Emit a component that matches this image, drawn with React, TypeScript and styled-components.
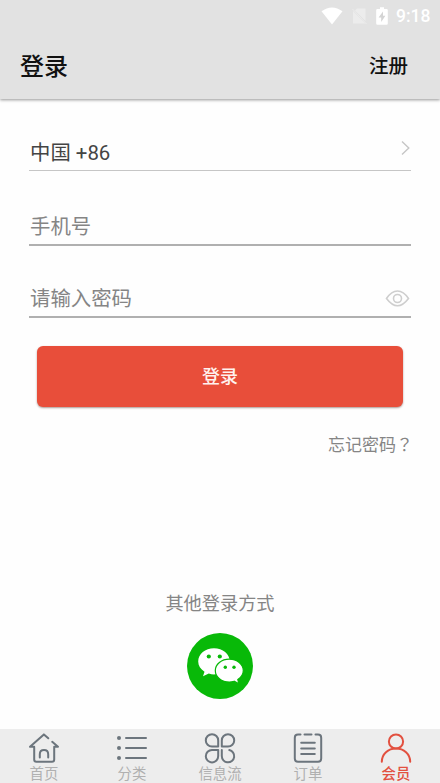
import React from "react";
import styled, { createGlobalStyle } from "styled-components";

const GlobalStyle = createGlobalStyle`
  * { box-sizing: border-box; }
  body { margin: 0; background: #fefefe; }
  button { border: 0; padding: 0; background: none; font: inherit; color: inherit; }
`;

const Screen = styled.div`
  width: 440px;
  height: 783px;
  display: flex;
  flex-direction: column;
  overflow: hidden;
  background: #fefefe;
  font-family: Roboto, "Noto Sans CJK SC", sans-serif;
`;

const Header = styled.header`
  height: 99px;
  flex: none;
  background: #e2e2e2;
  box-shadow: 0 1px 3px rgba(0, 0, 0, 0.42);
`;

const StatusBar = styled.div`
  height: 32px;
  padding: 0 10px 0 0;
  display: flex;
  justify-content: flex-end;
  align-items: center;
  color: #fff;
`;

const StatusIcons = styled.div`
  display: grid;
  grid-template-columns: 22px 15px 12px;
  column-gap: 9px;
`;

const Clock = styled.span`
  width: 34px;
  margin-left: 8px;
  font-size: 17.5px;
  font-weight: 500;
  line-height: 32px;
  white-space: nowrap;
`;

const TitleBar = styled.div`
  height: 67px;
  padding: 2px 32px 0 20px;
  display: flex;
  justify-content: space-between;
  align-items: flex-start;
  color: #111;
`;

const Title = styled.h1`
  margin: 0;
  font-size: 24px;
  font-weight: 500;
  line-height: 67px;
`;

const Register = styled.button`
  font-size: 19.5px;
  font-weight: 500;
  line-height: 65px;
`;

const Form = styled.main`
  flex: 1;
  padding: 34px 29px 0 29px;
  display: flex;
  flex-direction: column;
`;

const Field = styled.div<{ $height: number; $tone: string; $line: string }>`
  height: ${(p) => p.$height}px;
  flex: none;
  padding-left: 1px;
  display: flex;
  align-items: flex-end;
  justify-content: space-between;
  border-bottom: ${(p) => (p.$line === "thin" ? "1px solid #c6c6c6" : "2px solid #b0b0b0")};
  color: ${(p) => p.$tone};
  font-size: 20.4px;
  line-height: 34px;
`;

const FieldIcon = styled.span`
  height: 37px;
  display: flex;
  align-items: center;
`;

const Submit = styled.button`
  height: 61px;
  flex: none;
  margin: 28px 8px 0;
  padding-top: 1px;
  border-radius: 6px;
  background: #e84e3a;
  color: #fff2ef;
  font-size: 18px;
  font-weight: 500;
  line-height: 60px;
  box-shadow: 0 1px 2px rgba(70, 30, 20, 0.45);
`;

const Forgot = styled.button`
  align-self: flex-end;
  margin: 25px -2px 0 0;
  color: #858585;
  font-size: 17px;
  line-height: 24px;
`;

const QuestionMark = styled.span`
  font-family: "Noto Sans CJK TC", sans-serif;
`;

const OtherLogin = styled.section`
  height: 140px;
  flex: none;
  display: flex;
  flex-direction: column;
  align-items: center;
  gap: 14px;
  color: #858585;
  font-size: 18.2px;
  line-height: 30px;
`;

const Nav = styled.nav`
  height: 54px;
  flex: none;
  display: grid;
  grid-template-columns: repeat(5, 1fr);
  background: #ededed;
`;

const NavItem = styled.button<{ $active?: boolean }>`
  height: 54px;
  display: flex;
  flex-direction: column;
  align-items: center;
  color: ${(p) => (p.$active ? "#e2503f" : "#6c757d")};
`;

const NavLabel = styled.span<{ $active?: boolean }>`
  height: 18px;
  font-size: 14.4px;
  line-height: 19px;
  font-weight: ${(p) => (p.$active ? 500 : 400)};
  color: ${(p) => (p.$active ? "#e2503f" : "#b0b0b0")};
`;

const WifiIcon = () => (
  <svg width="22" height="18" viewBox="0 0 22 18">
    <path d="M0.5 4.3Q11-3.4 21.5 4.3L11 17.5Z" fill="#fff" />
  </svg>
);

const NoSimIcon = () => (
  <svg width="15" height="18" viewBox="0 0 15 18">
    <path d="M5 1.5H13.5V14L3 3.5ZM1 4L13.5 16.5H1Z" fill="#ececec" />
    <path d="M0.5 2L14.5 17" stroke="#ececec" strokeWidth="1" />
  </svg>
);

const BatteryIcon = () => (
  <svg width="12" height="18" viewBox="0 0 12 18">
    <path d="M4 0.3H8V2H10.5Q11.8 2 11.8 3.3V16.4Q11.8 17.7 10.5 17.7H1.5Q0.2 17.7 0.2 16.4V3.3Q0.2 2 1.5 2H4Z" fill="#fff" />
    <path d="M7 4.5L2.6 10.5H5.2V15L9.4 8.8H7Z" fill="#d4d4d4" />
  </svg>
);

const ChevronIcon = () => (
  <svg width="11" height="37" viewBox="0 0 11 37">
    <path d="M2 8.5L8.8 15L2 21.5" fill="none" stroke="#c6c6c6" strokeWidth="1.4" />
  </svg>
);

const EyeIcon = () => (
  <svg width="26" height="18" viewBox="0 0 26 18">
    <g fill="none" stroke="#cecece" strokeWidth="1.6">
      <path d="M1.5 9.5Q6.5 2 12.5 2T23.5 9.5Q18 16.8 12.5 16.8T1.5 9.5Z" />
      <circle cx="12.5" cy="9.5" r="4" />
    </g>
  </svg>
);

const WeChatIcon = () => (
  <svg width="66" height="66" viewBox="0 0 66 66">
    <circle cx="33" cy="33" r="33" fill="#08b908" />
    <path d="M27 15.2C18.2 15.2 11.2 21 11.2 28.5C11.2 32.5 13.5 36.2 17.5 38.7L16 43.3L21.8 40.5C23.5 41.1 25.2 41.4 27 41.4C35.7 41.4 42.8 35.6 42.8 28.3S35.7 15.2 27 15.2Z" fill="#fff" />
    <path d="M42.3 26.2C34.5 26.2 28.3 31.2 28.3 37.6S34.5 49 42.3 49C44 49 45.6 48.7 47.2 48.2L51.8 50.8L50.8 46.5C54.3 44.3 56.3 41.2 56.3 37.6C56.3 31.2 50.1 26.2 42.3 26.2Z" fill="#fff" stroke="#08b908" strokeWidth="1.2" />
    <g fill="#08b908">
      <circle cx="21.8" cy="23.5" r="2.1" />
      <circle cx="32.8" cy="23.5" r="2.1" />
      <circle cx="38.3" cy="34.3" r="1.7" />
      <circle cx="47" cy="34.3" r="1.7" />
    </g>
  </svg>
);

const NavSvg = styled.svg`
  width: 32px;
  height: 32px;
  margin-top: 4px;
  flex: none;
  fill: none;
  stroke: currentColor;
  stroke-width: 2;
  stroke-linecap: round;
  stroke-linejoin: round;
`;

const HomeIcon = () => (
  <NavSvg viewBox="0 0 32 32">
    <path d="M20.3 5.3L15.9 1.4L2 13.8H6.2V26.5Q6.2 28.7 8.4 28.7H24Q26.2 28.7 26.2 26.5V13.8H30L24.2 8.8" />
    <path d="M11.8 24.5V21.3Q11.8 17.1 16 17.1T20.2 21.3V24.5" />
  </NavSvg>
);

const ListIcon = () => (
  <NavSvg viewBox="0 0 32 32">
    <path d="M10 5H30M10 15H30M10 25H30" />
    <g fill="currentColor" stroke="none">
      <circle cx="3" cy="5" r="2" />
      <circle cx="3" cy="15" r="2" />
      <circle cx="3" cy="25" r="2" />
    </g>
  </NavSvg>
);

const PetalsIcon = () => (
  <NavSvg viewBox="0 0 32 32">
    <path d="M14.2 13.6V7.4A6.2 6.2 0 1 0 8 13.6Z" />
    <path d="M17.8 13.6V7.4A6.2 6.2 0 1 1 24 13.6Z" />
    <path d="M14.2 17V23.1A6.2 6.2 0 1 1 8 17Z" />
    <path d="M17.8 17V23.1A6.2 6.2 0 1 0 25.3 17.1" />
  </NavSvg>
);

const OrderIcon = () => (
  <NavSvg viewBox="0 0 32 32">
    <path d="M8.5 1.5H6Q2.8 1.5 2.8 4.7V25.5Q2.8 28.7 6 28.7H26Q29.2 28.7 29.2 25.5V4.7Q29.2 1.5 26 1.5H23.5M12.5 1.5H19.5" />
    <path d="M9.2 9.8H22.8M9.2 15.4H22.8M9.2 21H22.8" />
  </NavSvg>
);

const MemberIcon = () => (
  <NavSvg viewBox="0 0 32 32">
    <circle cx="16" cy="8.5" r="7.1" />
    <path d="M1.8 28.7C2 21 8 15.6 16 15.6S30 21 30.2 28.7" />
  </NavSvg>
);

const tabs = [
  { label: "首页", Icon: HomeIcon },
  { label: "分类", Icon: ListIcon },
  { label: "信息流", Icon: PetalsIcon },
  { label: "订单", Icon: OrderIcon },
  { label: "会员", Icon: MemberIcon, active: true },
];

export default function App() {
  return (
    <Screen>
      <GlobalStyle />
      <Header>
        <StatusBar>
          <StatusIcons>
            <WifiIcon />
            <NoSimIcon />
            <BatteryIcon />
          </StatusIcons>
          <Clock>9:18</Clock>
        </StatusBar>
        <TitleBar>
          <Title>登录</Title>
          <Register>注册</Register>
        </TitleBar>
      </Header>
      <Form>
        <Field $height={38} $tone="#444" $line="thin">
          <span>中国 +86</span>
          <FieldIcon><ChevronIcon /></FieldIcon>
        </Field>
        <Field $height={75} $tone="#858585" $line="thick">
          <span>手机号</span>
        </Field>
        <Field $height={72} $tone="#858585" $line="thick">
          <span>请输入密码</span>
          <FieldIcon><EyeIcon /></FieldIcon>
        </Field>
        <Submit>登录</Submit>
        <Forgot>忘记密码<QuestionMark>？</QuestionMark></Forgot>
      </Form>
      <OtherLogin>
        <span>其他登录方式</span>
        <WeChatIcon />
      </OtherLogin>
      <Nav>
        {tabs.map(({ label, Icon, active }) => (
          <NavItem key={label} $active={active}>
            <Icon />
            <NavLabel $active={active}>{label}</NavLabel>
          </NavItem>
        ))}
      </Nav>
    </Screen>
  );
}
